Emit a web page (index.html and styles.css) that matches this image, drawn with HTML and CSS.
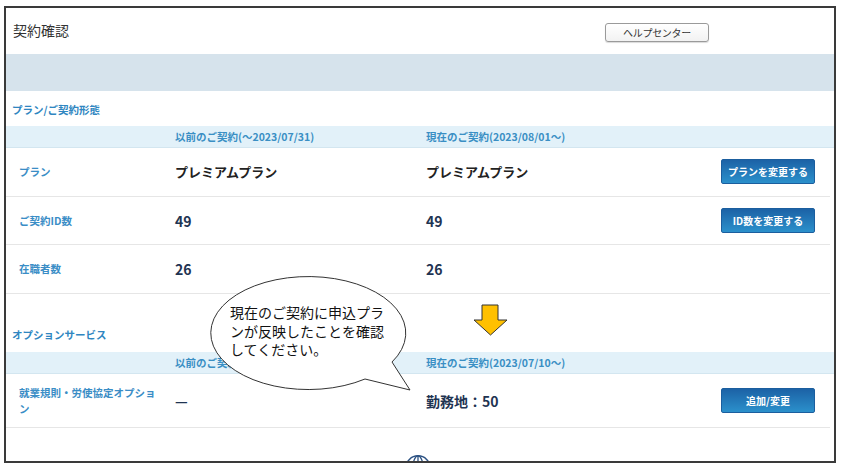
FILE: index.html
```html
<!DOCTYPE html>
<html lang="ja">
<head>
<meta charset="utf-8">
<title>契約確認</title>
<link rel="stylesheet" href="styles.css">
</head>
<body>
<div class="frame">
  <div class="header">
    <div class="title">契約確認</div>
    <button class="help">ヘルプセンター</button>
  </div>
  <div class="band"></div>

  <div class="section-title first">プラン/ご契約形態</div>
  <div class="grid head">
    <div></div>
    <div>以前のご契約(～2023/07/31)</div>
    <div>現在のご契約(2023/08/01～)</div>
    <div></div>
  </div>
  <div class="grid row">
    <div class="label">プラン</div>
    <div class="value kana">プレミアムプラン</div>
    <div class="value kana">プレミアムプラン</div>
    <div><button class="btn">プランを変更する</button></div>
  </div>
  <div class="grid row">
    <div class="label">ご契約ID数</div>
    <div class="value">49</div>
    <div class="value">49</div>
    <div><button class="btn">ID数を変更する</button></div>
  </div>
  <div class="grid row">
    <div class="label">在職者数</div>
    <div class="value">26</div>
    <div class="value">26</div>
    <div></div>
  </div>

  <div class="section-title second">オプションサービス</div>
  <div class="grid head">
    <div></div>
    <div>以前のご契約</div>
    <div>現在のご契約(2023/07/10～)</div>
    <div></div>
  </div>
  <div class="grid row tall">
    <div class="label wrap">就業規則・労使協定オプション</div>
    <div class="value">—</div>
    <div class="value">勤務地：50</div>
    <div><button class="btn">追加/変更</button></div>
  </div>

  <div class="footer">
    <svg class="globe" width="28" height="28" viewBox="0 0 30 30">
      <circle cx="15" cy="15" r="13" fill="none" stroke="#2c5283" stroke-width="1.6"/>
      <ellipse cx="15" cy="15" rx="5.5" ry="13" fill="none" stroke="#2c5283" stroke-width="1.4"/>
      <line x1="15" y1="2" x2="15" y2="28" stroke="#2c5283" stroke-width="1.4"/>
      <line x1="4" y1="9" x2="26" y2="9" stroke="#2c5283" stroke-width="1.4"/>
    </svg>
  </div>
</div>

<div class="overlay">
  <svg width="842" height="470" viewBox="0 0 842 470">
    <path d="M 392 362 A 97.5 56.5 0 1 0 365 379 L 410 390 Z" fill="#ffffff" stroke="#333333" stroke-width="1"/>
    <polygon points="482,305 498,305 498,320 507,320 490.5,335 474,320 482,320" fill="#ffc000" stroke="#333333" stroke-width="1"/>
  </svg>
  <div class="bubble-text">現在のご契約に申込プラ<br>ンが反映したことを確認<br>してください。</div>
</div>
</body>
</html>
```

FILE: styles.css
```css
html, body {
  margin: 0;
  padding: 0;
  background: #ffffff;
}
body {
  position: relative;
  width: 842px;
  height: 470px;
  overflow: hidden;
  font-family: "Noto Sans CJK JP", "Noto Sans", sans-serif;
}
.frame {
  position: relative;
  margin: 6px 6px 0 4px;
  height: 453px;
  border: 2px solid #3a3a3a;
  overflow: hidden;
  background: #ffffff;
}
.header {
  height: 46px;
  display: flex;
  align-items: center;
  justify-content: space-between;
  padding: 0 125px 0 7px;
}
.title {
  font-size: 14px;
  color: #333333;
  line-height: 18px;
  margin-top: -2px;
}
.help {
  width: 104px;
  height: 19px;
  margin-top: 3px;
  padding: 0;
  border: 1px solid #9a9a9a;
  border-radius: 3px;
  background: linear-gradient(#ffffff, #f2f2f2);
  box-shadow: 0 1px 1px rgba(0,0,0,0.15);
  font-family: "Noto Sans CJK JP", sans-serif;
  font-size: 10px;
  line-height: 16px;
  color: #333333;
  letter-spacing: -0.3px;
}
.band {
  height: 37px;
  background: #d6e3ec;
}
.section-title {
  padding-left: 6px;
  font-size: 10.5px;
  line-height: 14px;
  font-weight: bold;
  color: #2f86c1;
  padding-bottom: 9px;
}
.section-title.first { padding-top: 12px; }
.section-title.second { padding-top: 34px; padding-bottom: 10px; }

.grid {
  display: grid;
  grid-template-columns: 169px 251px 1fr 94px;
  padding-right: 19px;
  align-items: center;
}
.head {
  height: 21px;
  background: #e2f1f9;
  border-bottom: 1px solid #d3e6f0;
  font-size: 10.5px;
  line-height: 14px;
  font-weight: bold;
  color: #3a8fc4;
}
.row {
  height: 47.7px;
  border-bottom: 1px solid #e6e6e6;
  margin-right: 4px;
  padding-right: 15px;
}
.row.tall { height: 53px; }
.label {
  padding-left: 13px;
  font-size: 10.5px;
  line-height: 16px;
  font-weight: bold;
  color: #3a8dc6;
}
.label.wrap {
  padding-right: 14px;
}
.value {
  font-size: 14px;
  line-height: 18px;
  font-weight: bold;
  color: #1f3452;
}
.value.kana {
  font-size: 13px;
  color: #222222;
}
.btn {
  display: block;
  width: 94px;
  height: 25px;
  padding: 0;
  border: 1px solid #1b5e9e;
  border-radius: 2px;
  background: linear-gradient(#1c62a6, #2b90cb);
  color: #ffffff;
  font-family: "Noto Sans CJK JP", sans-serif;
  font-size: 10px;
  line-height: 14px;
  font-weight: bold;
}
.footer {
  display: flex;
  justify-content: center;
  padding-top: 26px;
  padding-right: 4px;
}
.globe { display: block; }

.overlay {
  position: absolute;
  left: 0;
  top: 0;
  width: 842px;
  height: 470px;
  pointer-events: none;
}
.overlay svg {
  position: absolute;
  left: 0;
  top: 0;
}
.bubble-text {
  position: absolute;
  left: 230px;
  top: 303px;
  font-size: 14px;
  line-height: 18.5px;
  color: #111111;
  white-space: nowrap;
}
```
